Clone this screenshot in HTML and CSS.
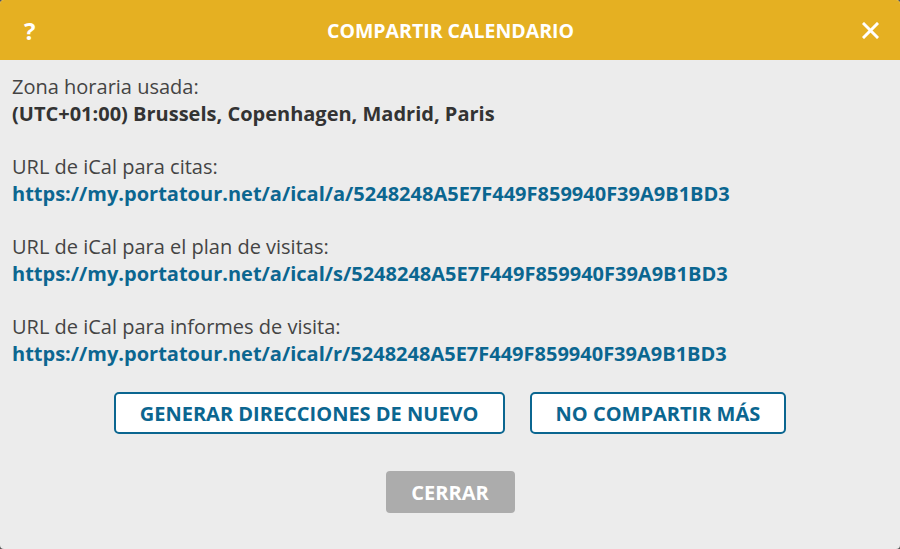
FILE: index.html
```html
<!DOCTYPE html>
<html lang="es">
<head>
    <meta charset="UTF-8">
    <meta name="viewport" content="width=device-width, initial-scale=1.0">
    <title>Compartir calendario</title>
    <link rel="stylesheet" href="styles.css">
</head>
<body>
    <div class="dialog">
        <div class="dialog-header">
            <span class="help-btn">?</span>
            <h2>COMPARTIR CALENDARIO</h2>
            <span class="close-btn">
                <svg width="17" height="17" viewBox="0 0 17 17">
                    <path d="M2 2 L15 15 M15 2 L2 15" stroke="#fff" stroke-width="3" stroke-linecap="square" fill="none"/>
                </svg>
            </span>
        </div>

        <div class="dialog-body">
            <div class="info-block">
                <div>Zona horaria usada:</div>
                <div class="strong">(UTC+01:00) Brussels, Copenhagen, Madrid, Paris</div>
            </div>

            <div class="info-block">
                <div>URL de iCal para citas:</div>
                <a class="ical-link" href="#">https://my.portatour.net/a/ical/a/5248248A5E7F449F859940F39A9B1BD3</a>
            </div>

            <div class="info-block">
                <div>URL de iCal para el plan de visitas:</div>
                <a class="ical-link" href="#">https://my.portatour.net/a/ical/s/5248248A5E7F449F859940F39A9B1BD3</a>
            </div>

            <div class="info-block">
                <div>URL de iCal para informes de visita:</div>
                <a class="ical-link" href="#">https://my.portatour.net/a/ical/r/5248248A5E7F449F859940F39A9B1BD3</a>
            </div>

            <div class="actions">
                <button type="button" class="btn-outline">GENERAR DIRECCIONES DE NUEVO</button>
                <button type="button" class="btn-outline">NO COMPARTIR MÁS</button>
            </div>

            <div class="footer">
                <button type="button" class="btn-close">CERRAR</button>
            </div>
        </div>
    </div>
</body>
</html>
```

FILE: styles.css
```css
body {
    font-family: "Open Sans", Arial, sans-serif;
    background: #555;
    margin: 0;
    height: 100vh;
}

.dialog {
    background: #ececec;
    border-radius: 4px;
    height: 549px;
    overflow: hidden;
}

.dialog-header {
    background: #e5b022;
    height: 60px;
    display: flex;
    align-items: center;
    justify-content: space-between;
    padding: 0 21px 0 24px;
    color: #fff;
}

.dialog-header h2 {
    margin: 0;
    font-size: 19.5px;
    font-weight: bold;
    padding-left: 2px;
}

.help-btn {
    font-size: 24px;
    font-weight: bold;
    width: 13px;
}

.close-btn {
    display: flex;
    align-items: center;
}

.dialog-body {
    padding: 14px 12px 0 12px;
    font-size: 20px;
    line-height: 26.7px;
    color: #444;
}

.info-block {
    margin-bottom: 26.7px;
}

.strong {
    font-weight: bold;
    color: #333;
}

.ical-link {
    font-weight: bold;
    color: #0b6690;
    text-decoration: none;
}

.actions {
    display: flex;
    justify-content: center;
    gap: 25px;
    margin-top: -2px;
}

.btn-outline {
    font-family: "Open Sans", Arial, sans-serif;
    font-size: 20px;
    font-weight: bold;
    color: #0b6690;
    background: #fff;
    border: 2px solid #0b6690;
    border-radius: 5px;
    height: 42px;
    padding: 0 24px;
    cursor: pointer;
}

.footer {
    display: flex;
    justify-content: center;
    margin-top: 37px;
}

.btn-close {
    font-family: "Open Sans", Arial, sans-serif;
    font-size: 20px;
    font-weight: bold;
    color: #fff;
    background: #acacac;
    border: none;
    border-radius: 4px;
    height: 42px;
    width: 129px;
}
```
